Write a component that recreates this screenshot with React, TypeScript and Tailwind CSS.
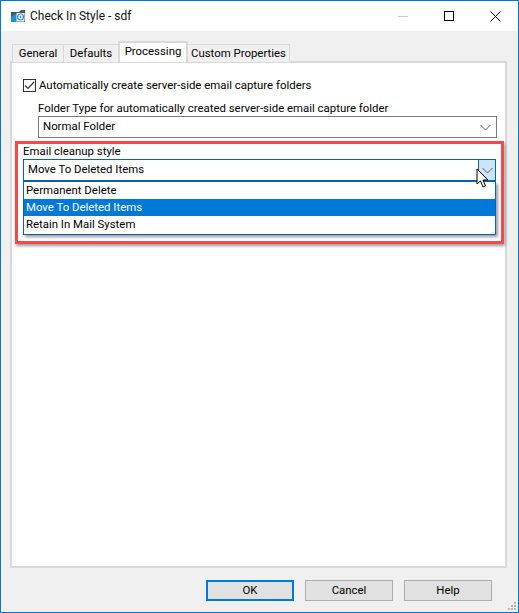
import React from "react";

const Chevron = () => (
  <svg width="11" height="7" viewBox="0 0 11 7" fill="none" stroke="#5f5f5f" strokeWidth="1">
    <path d="M0.5 1 L5.5 6 L10.5 1" />
  </svg>
);

const tabs = [
  { label: "General", w: "w-[52px]" },
  { label: "Defaults", w: "w-[56px]" },
];

export default function App() {
  return (
    <div
      className="w-[519px] h-[613px] flex flex-col border border-[#0078d7] bg-[#f0f0f0] text-[#000] text-[11.4px] overflow-hidden"
      style={{ fontFamily: 'Roboto, "Noto Sans", sans-serif' }}
    >
      {/* title bar */}
      <div className="h-[30px] shrink-0 bg-white flex items-center">
        <svg className="ml-[9px]" width="16" height="14" viewBox="0 0 16 14">
          <path d="M1 3 L9 3 L11 1 L15 1 L15 13 L1 13 Z" fill="#4a5560" />
          <path d="M1 13 L1 9 Q3 5 7 5 L7 13 Z" fill="#1c8fd6" />
          <rect x="6.5" y="4" width="8" height="8.5" fill="#ffffff" />
          <circle cx="10.5" cy="8" r="3" fill="none" stroke="#1c8fd6" strokeWidth="1.2" />
          <circle cx="10.5" cy="8" r="1" fill="#1c8fd6" />
        </svg>
        <span className="ml-[4px] text-[12px] leading-none text-[#111]">Check In Style - sdf</span>
        <div className="ml-auto flex items-center">
          <div className="w-[46px] h-[30px] flex items-center justify-center">
            <div className="w-[10px] h-px bg-[#c8c8c8]" />
          </div>
          <div className="w-[46px] h-[30px] flex items-center justify-center">
            <div className="w-[10px] h-[10px] border border-black" />
          </div>
          <div className="w-[46px] h-[30px] flex items-center justify-center">
            <svg width="11" height="11" viewBox="0 0 11 11" stroke="#000" strokeWidth="1">
              <path d="M0.5 0.5 L10.5 10.5 M10.5 0.5 L0.5 10.5" />
            </svg>
          </div>
        </div>
      </div>

      {/* dialog body */}
      <div className="flex-1 flex flex-col min-h-0 pt-[10px] pl-[9px] pr-[11px]">
        <div className="h-[21px] shrink-0 flex items-end pl-[2px] relative z-10 -mb-px">
          {tabs.map((t) => (
            <div
              key={t.label}
              className={`${t.w} h-[18px] flex items-center justify-center border border-b-0 border-[#d9d9d9] -mr-px bg-[#f0f0f0]`}
            >
              {t.label}
            </div>
          ))}
          <div className="w-[70px] h-[21px] pb-[2px] flex items-center justify-center border-2 border-b-0 border-[#d9d9d9] -mr-px bg-white">
            Processing
          </div>
          <div className="w-[103px] h-[18px] flex items-center justify-center border border-b-0 border-[#d9d9d9] bg-[#f0f0f0]">
            Custom Properties
          </div>
        </div>

        <div className="flex-1 min-h-0 bg-white border-2 border-[#d9d9d9] flex flex-col pt-[15px]">
          <div className="h-[14px] flex items-center pl-[11px]">
            <div className="w-[13px] h-[13px] border border-[#333] flex items-center justify-center">
              <svg width="11" height="9" viewBox="0 0 11 9" fill="none" stroke="#333" strokeWidth="1.2">
                <path d="M1 4.5 L4 7.5 L10 1" />
              </svg>
            </div>
            <span className="ml-[3px] mt-px leading-none">Automatically create server-side email capture folders</span>
          </div>

          <div className="ml-[26px] mt-[8px] leading-[16px] h-[16px]">
            Folder Type for automatically created server-side email capture folder
          </div>
          <div className="ml-[26px] w-[459px] h-[22px] border border-[#7a7a7a] flex items-center pl-[4px] pr-[5px] justify-between">
            <span className="-mt-px">Normal Folder</span>
            <Chevron />
          </div>

          {/* highlighted region */}
          <div className="ml-[3px] mt-[3px] w-[489px] h-[103px] border-[3px] border-[#f04a4a] shadow-[1px_2px_3px_rgba(0,0,0,0.4)] pl-[5px] pr-[5px] relative">
            <div className="h-[14px] leading-[14px]">Email cleanup style</div>
            <div className="h-[23px] mt-[1px] border border-[#0a64ad] border-b-2 flex items-center pl-[4px] justify-between">
              <span className="-mt-px">Move To Deleted Items</span>
              <div className="relative w-[17px] h-full border-l border-[#0a64ad] bg-[#cce4f7] flex items-center justify-center">
                <Chevron />
                <svg className="absolute left-[-3px] top-[8px] z-20" width="13" height="20" viewBox="0 0 13 20">
                  <path
                    d="M1 1 L1 16 L4.5 13 L7 19 L9.5 18 L7 12 L12 12 Z"
                    fill="#fff"
                    stroke="#000"
                    strokeWidth="1"
                    strokeLinejoin="round"
                  />
                </svg>
              </div>
            </div>
            <div className="border border-[#0a64ad] border-t-0 bg-white shadow-[2px_2px_3px_rgba(0,0,0,0.4)] flex flex-col leading-[17px] h-[53px]">
              <div className="h-[17px] pl-[2px]">Permanent Delete</div>
              <div className="h-[17px] pl-[2px] bg-[#0078d7] text-white">Move To Deleted Items</div>
              <div className="h-[17px] pl-[2px]">Retain In Mail System</div>
            </div>
          </div>
        </div>

        {/* footer */}
        <div className="h-[44px] shrink-0 flex items-start justify-end gap-[11px] pt-[12px] pr-[15px] relative">
          <div className="w-[88px] h-[21px] bg-[#e1e1e1] border-2 border-[#0078d7] flex items-center justify-center">OK</div>
          <div className="w-[88px] h-[21px] bg-[#e1e1e1] border border-[#adadad] flex items-center justify-center">Cancel</div>
          <div className="w-[88px] h-[21px] bg-[#e1e1e1] border border-[#adadad] flex items-center justify-center">Help</div>
          <svg className="absolute right-[-10px] bottom-[1px]" width="10" height="10" viewBox="0 0 10 10" fill="#b8b8b8">
            <rect x="7" y="1" width="2" height="2" />
            <rect x="4" y="4" width="2" height="2" />
            <rect x="7" y="4" width="2" height="2" />
            <rect x="1" y="7" width="2" height="2" />
            <rect x="4" y="7" width="2" height="2" />
            <rect x="7" y="7" width="2" height="2" />
          </svg>
        </div>
      </div>
    </div>
  );
}
